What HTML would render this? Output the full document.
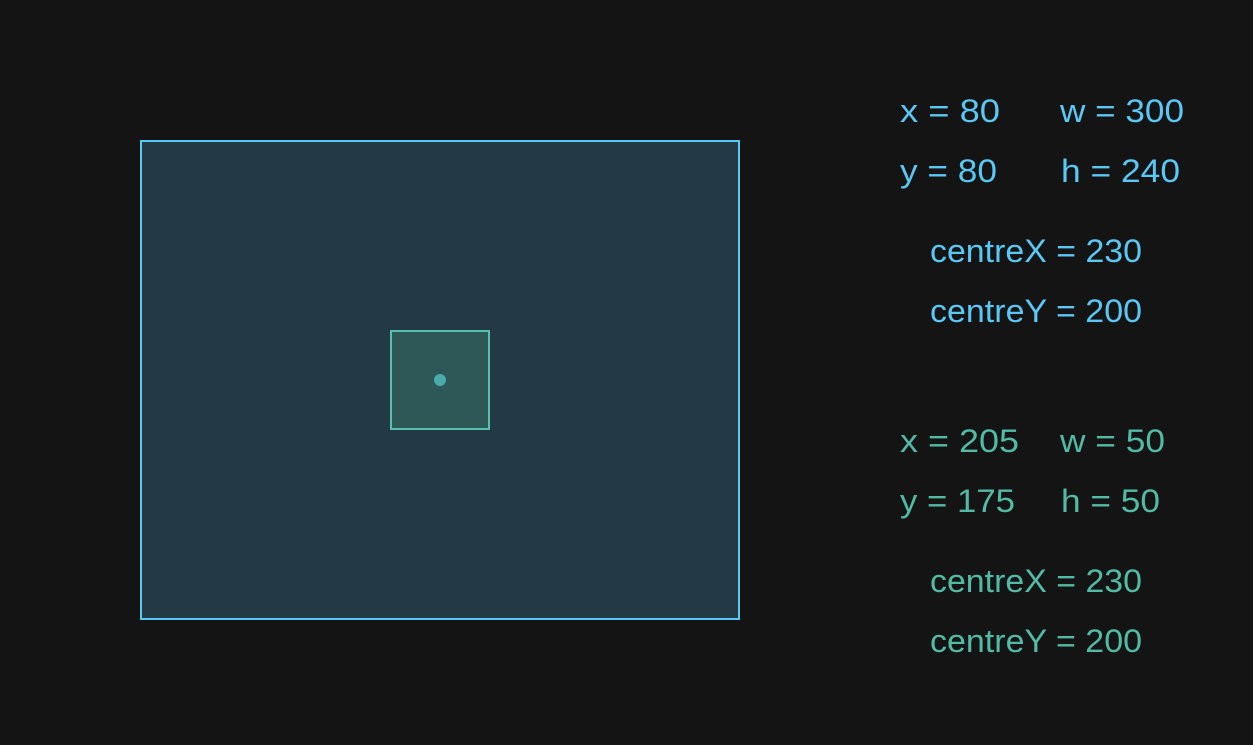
<!DOCTYPE html>
<html><head><meta charset="utf-8"><style>
html,body{margin:0;padding:0;background:#141414;width:1253px;height:745px;overflow:hidden}
</style></head><body>
<svg width="1253" height="745" viewBox="0 0 1253 745" xmlns="http://www.w3.org/2000/svg" font-family="Liberation Sans, sans-serif" font-size="32">
<rect x="0" y="0" width="1253" height="745" fill="#141414"/>
<rect x="141" y="141" width="598" height="478" fill="#233a46" stroke="#5ac8f5" stroke-width="2"/>
<rect x="391" y="331" width="98" height="98" fill="#2e5757" stroke="#58c0aa" stroke-width="2"/>
<circle cx="440" cy="380" r="6" fill="#4aabab"/>
<g fill="#5ac8f5">
<text x="900" y="122" textLength="100" lengthAdjust="spacingAndGlyphs">x = 80</text>
<text x="1060" y="122" textLength="124" lengthAdjust="spacingAndGlyphs">w = 300</text>
<text x="900" y="182" textLength="97" lengthAdjust="spacingAndGlyphs">y = 80</text>
<text x="1061" y="182" textLength="119" lengthAdjust="spacingAndGlyphs">h = 240</text>
<text x="930" y="262" textLength="212" lengthAdjust="spacingAndGlyphs">centreX = 230</text>
<text x="930" y="322" textLength="212" lengthAdjust="spacingAndGlyphs">centreY = 200</text>
</g>
<g fill="#52bba6">
<text x="900" y="452" textLength="119" lengthAdjust="spacingAndGlyphs">x = 205</text>
<text x="1060" y="452" textLength="105" lengthAdjust="spacingAndGlyphs">w = 50</text>
<text x="900" y="512" textLength="115" lengthAdjust="spacingAndGlyphs">y = 175</text>
<text x="1061" y="512" textLength="99" lengthAdjust="spacingAndGlyphs">h = 50</text>
<text x="930" y="592" textLength="212" lengthAdjust="spacingAndGlyphs">centreX = 230</text>
<text x="930" y="652" textLength="212" lengthAdjust="spacingAndGlyphs">centreY = 200</text>
</g>
</svg>
</body></html>
